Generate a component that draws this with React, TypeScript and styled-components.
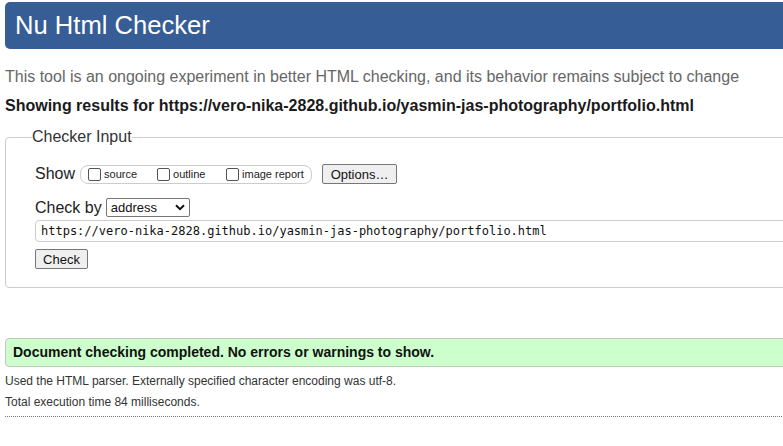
import React from "react";
import styled, { createGlobalStyle } from "styled-components";

const Global = createGlobalStyle`
  html, body { margin: 0; padding: 0; background: #fff; overflow: hidden; }
  body { font-family: "Liberation Sans", Arial, sans-serif; color: #222; }
`;

const Page = styled.div`
  width: 1000px;
  padding: 2px 0 0 5px;
  box-sizing: border-box;
`;

const Header = styled.header`
  height: 47px;
  background: #365d95;
  border-radius: 5px;
  padding-left: 10px;
`;

const Title = styled.h1`
  margin: 0;
  font-size: 25.6px;
  font-weight: normal;
  line-height: 46px;
  color: #fff;
`;

const Intro = styled.p`
  margin: 19px 0 0;
  font-size: 16px;
  line-height: 18px;
  color: #666;
`;

const Results = styled.p`
  margin: 11px 0 0;
  font-size: 16px;
  line-height: 18px;
  font-weight: bold;
  color: #1a1a1a;
`;

const Fieldset = styled.fieldset`
  margin: 13px 0 0;
  padding: 0 0 18px 29px;
  border: 1px solid #ccc;
  border-radius: 4px;
`;

const Legend = styled.legend`
  padding: 0;
  margin-left: -3px;
  font-size: 16px;
  line-height: 18px;
  color: #333;
`;

const Row = styled.div<{ $mt: number }>`
  display: flex;
  align-items: center;
  margin-top: ${(p) => p.$mt}px;
`;

const Label = styled.span`
  font-size: 16px;
  line-height: 18px;
  color: #222;
`;

const Pill = styled.div`
  display: flex;
  align-items: center;
  height: 17px;
  margin-left: 5px;
  padding: 0 6px;
  border: 1px solid #ccc;
  border-radius: 8px;
`;

const CheckItem = styled.label<{ $w: number }>`
  display: flex;
  align-items: center;
  width: ${(p) => p.$w}px;
  font-size: 11px;
  color: #222;
`;

const Box = styled.input`
  appearance: none;
  width: 13px;
  height: 13px;
  margin: 0 3px 0 1px;
  border: 1px solid #555;
  border-radius: 2px;
  background: #fff;
  box-sizing: border-box;
`;

const Button = styled.button<{ $w: number; $ml?: number }>`
  width: ${(p) => p.$w}px;
  height: 20px;
  margin-left: ${(p) => p.$ml ?? 0}px;
  padding: 0;
  background: #efefef;
  border: 1px solid #767676;
  border-radius: 2px;
  font-family: "Liberation Sans", Arial, sans-serif;
  font-size: 13px;
  color: #111;
`;

const SelectWrap = styled.div`
  position: relative;
  margin-left: 4px;
`;

const Select = styled.select`
  appearance: none;
  width: 84px;
  height: 19px;
  padding: 0 0 0 4px;
  border: 1px solid #767676;
  border-radius: 2px;
  background: #fff;
  font-family: "Liberation Sans", Arial, sans-serif;
  font-size: 13px;
  color: #111;
`;

const Chevron = styled.svg`
  position: absolute;
  right: 5px;
  top: 6px;
  pointer-events: none;
`;

const UrlInput = styled.input`
  display: block;
  width: 100%;
  height: 22px;
  margin-top: 3px;
  padding: 0 0 0 5px;
  box-sizing: border-box;
  border: 1px solid #ccc;
  border-radius: 4px;
  font-family: "DejaVu Sans Mono", "Liberation Mono", monospace;
  font-size: 12px;
  color: #111;
`;

const Success = styled.div`
  margin-top: 50px;
  height: 29px;
  box-sizing: border-box;
  padding-left: 7px;
  background: #ccffcc;
  border: 1px solid #c4c4c4;
  border-radius: 4px;
  font-size: 14px;
  font-weight: bold;
  line-height: 27px;
  color: #111;
`;

const Note = styled.p<{ $mt: number }>`
  margin: ${(p) => p.$mt}px 0 0;
  font-size: 12px;
  line-height: 14px;
  color: #333;
`;

const Divider = styled.hr`
  margin: 7px 0 0;
  border: 0;
  border-top: 1px dotted #777;
`;

export default function App() {
  const url = "https://vero-nika-2828.github.io/yasmin-jas-photography/portfolio.html";
  return (
    <Page>
      <Global />
      <Header>
        <Title>Nu Html Checker</Title>
      </Header>
      <Intro>
        This tool is an ongoing experiment in better HTML checking, and its behavior remains subject to change
      </Intro>
      <Results>Showing results for {url}</Results>
      <Fieldset>
        <Legend>Checker Input</Legend>
        <Row $mt={18}>
          <Label>Show</Label>
          <Pill>
            <CheckItem $w={69}>
              <Box type="checkbox" />
              source
            </CheckItem>
            <CheckItem $w={69}>
              <Box type="checkbox" />
              outline
            </CheckItem>
            <CheckItem $w={80}>
              <Box type="checkbox" />
              image report
            </CheckItem>
          </Pill>
          <Button $w={75} $ml={10}>Options…</Button>
        </Row>
        <Row $mt={14}>
          <Label>Check by</Label>
          <SelectWrap>
            <Select defaultValue="address">
              <option value="address">address</option>
            </Select>
            <Chevron width="10" height="7" viewBox="0 0 10 7">
              <path d="M1 1.2 L5 5.2 L9 1.2" fill="none" stroke="#111" strokeWidth="2" />
            </Chevron>
          </SelectWrap>
        </Row>
        <UrlInput defaultValue={url} />
        <Row $mt={7}>
          <Button $w={53}>Check</Button>
        </Row>
      </Fieldset>
      <Success>Document checking completed. No errors or warnings to show.</Success>
      <Note $mt={7}>Used the HTML parser. Externally specified character encoding was utf-8.</Note>
      <Note $mt={7}>Total execution time 84 milliseconds.</Note>
      <Divider />
    </Page>
  );
}
